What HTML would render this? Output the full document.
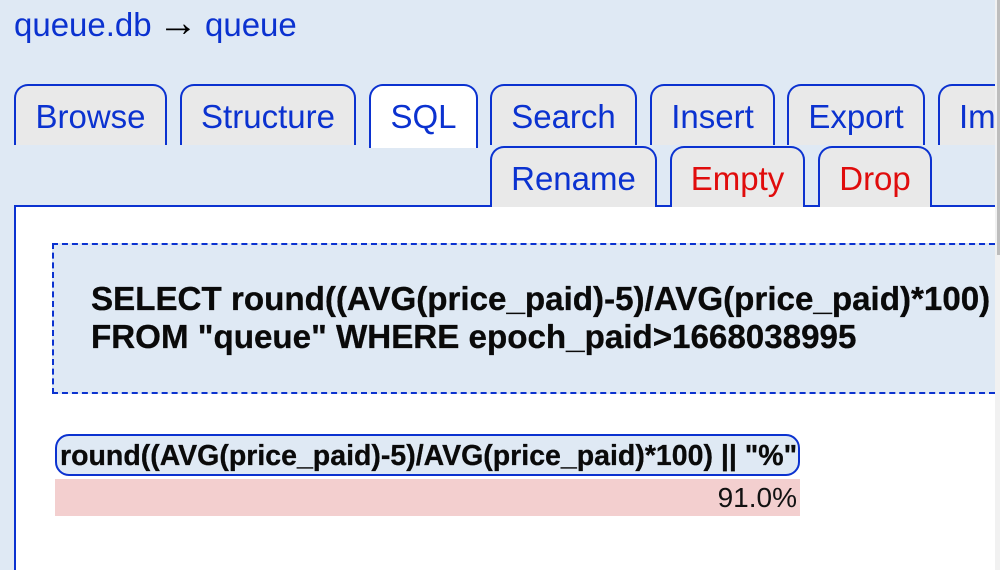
<!DOCTYPE html>
<html><head><meta charset="utf-8">
<style>
html,body{margin:0;padding:0;width:1000px;height:570px;overflow:hidden;background:#dfe9f4}
body{position:relative;font-family:"Liberation Sans",sans-serif}
.a{position:absolute;white-space:nowrap}
.t{position:absolute;box-sizing:border-box;background:#e9e9e9;border:2px solid #0b32d0;border-bottom:0;border-radius:14px 14px 0 0;color:#0b32d0;font-size:33px;line-height:38px;text-align:center;white-space:nowrap;overflow:hidden}
.r1{top:84px;height:61px;padding-top:12px}
.r2{top:146px;height:61px;padding-top:12px;z-index:3}
.red{color:#e00c0c}
</style></head><body>
<div class="a" style="left:14px;top:6px;font-size:33px;line-height:38px;color:#0b32d0">queue.db</div>
<div class="a" style="left:158px;top:0;font-size:40px;line-height:46px;color:#000">→</div>
<div class="a" style="left:205px;top:6px;font-size:33px;line-height:38px;color:#0b32d0">queue</div>

<div class="t r1" style="left:14px;width:153px">Browse</div>
<div class="t r1" style="left:180px;width:176px">Structure</div>
<div class="t r1" style="left:369px;width:109px;height:64px;background:#fff;z-index:2">SQL</div>
<div class="t r1" style="left:490px;width:147px">Search</div>
<div class="t r1" style="left:650px;width:125px">Insert</div>
<div class="t r1" style="left:787px;width:138px">Export</div>
<div class="t r1" style="left:938px;width:80px;background:#e9e9e9;text-align:left;padding-left:19px">Import</div>

<div class="a" style="left:14px;top:205px;width:981px;height:365px;box-sizing:border-box;background:#fff;border-top:2px solid #0b32d0;border-left:2px solid #0b32d0"></div>

<div class="t r2" style="left:490px;width:167px">Rename</div>
<div class="t r2 red" style="left:670px;width:135px">Empty</div>
<div class="t r2 red" style="left:818px;width:114px">Drop</div>

<div class="a" style="left:52px;top:243px;width:943px;height:151px;box-sizing:border-box;background:#dfe9f4;border-top:2px dashed #0b32d0;border-bottom:2px dashed #0b32d0;border-left:2px dashed #0b32d0"></div>
<div class="a" style="left:91px;top:281px;font-size:33.15px;line-height:38px;font-weight:bold;color:#0a0a0a;-webkit-text-stroke:.3px #0a0a0a">SELECT round((AVG(price_paid)-5)/AVG(price_paid)*100)<br>FROM "queue" WHERE epoch_paid&gt;1668038995</div>

<div class="a" style="left:55px;top:434px;width:745px;height:42px;box-sizing:border-box;background:#dfe9f4;border:2px solid #0b32d0;border-radius:14px"></div>
<div class="a" style="left:60px;top:439px;font-size:28.5px;line-height:34px;font-weight:bold;color:#0a0a0a;-webkit-text-stroke:.3px #0a0a0a">round((AVG(price_paid)-5)/AVG(price_paid)*100) || "%"</div>
<div class="a" style="left:55px;top:479px;width:745px;height:37px;background:#f3cfcf"></div>
<div class="a" style="right:203px;top:481px;font-size:28px;line-height:34px;color:#111">91.0%</div>

<div class="a" style="left:995px;top:0;width:5px;height:570px;background:#f1f1f1;z-index:5"></div>
<div class="a" style="left:997px;top:0;width:3px;height:255px;background:#bdbdbd;z-index:6"></div>
</body></html>
